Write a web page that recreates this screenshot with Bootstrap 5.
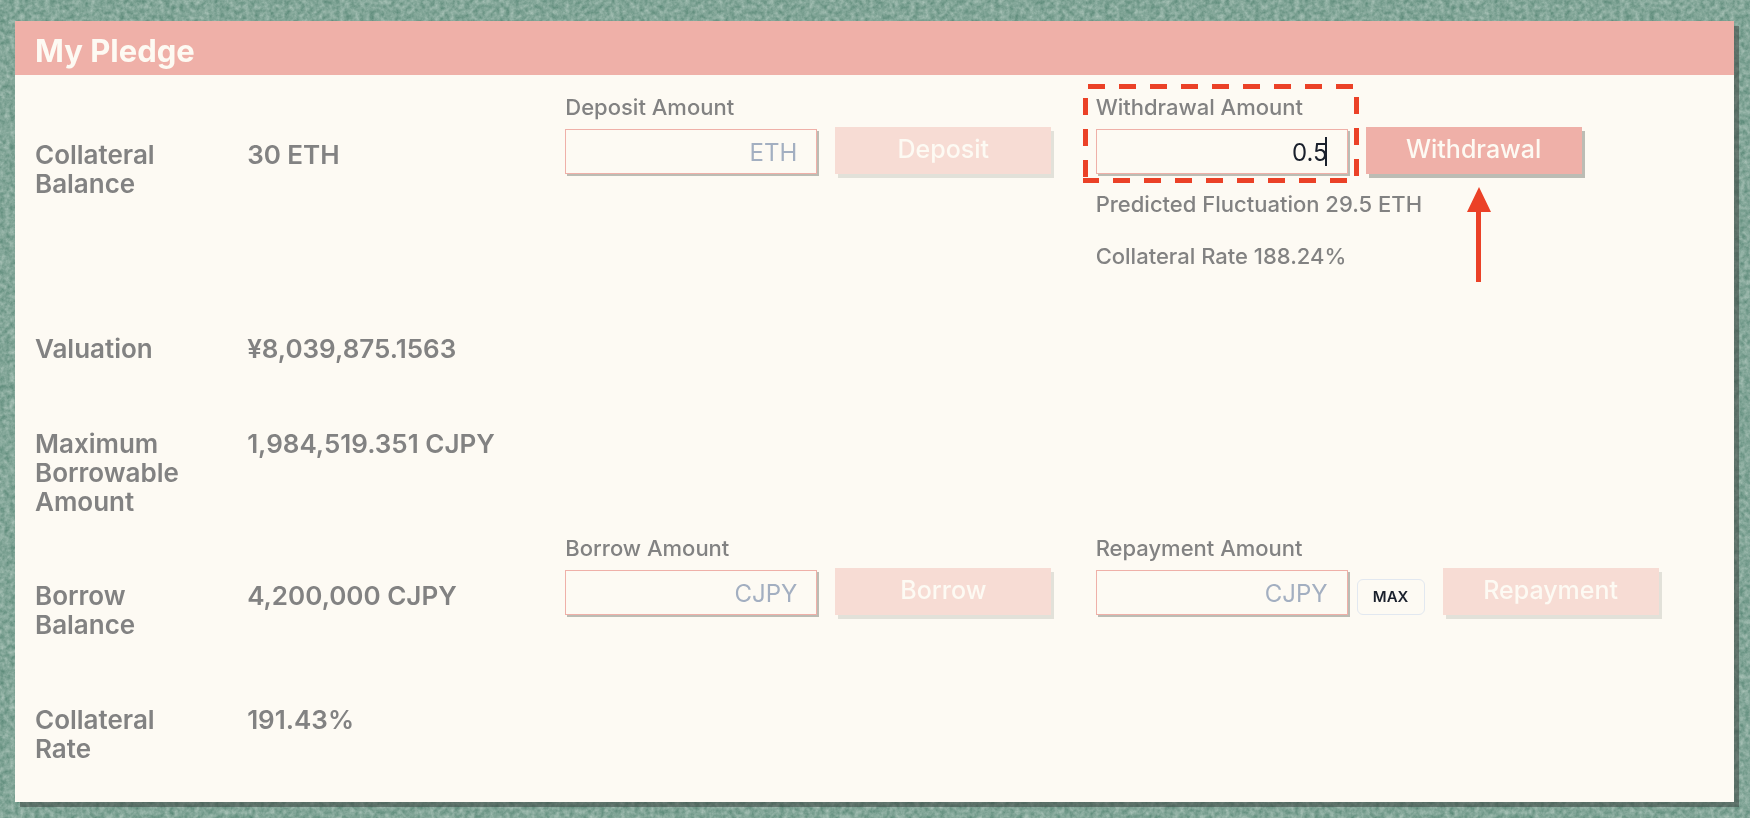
<!DOCTYPE html>
<html lang="en">
<head>
<meta charset="utf-8">
<meta name="viewport" content="width=device-width, initial-scale=1">
<title>My Pledge</title>
<link href="https://cdn.jsdelivr.net/npm/bootstrap@5.3.0/dist/css/bootstrap.min.css" rel="stylesheet">
<style>
  :root { --salmon: #efb0a8; --cream: #fdfaf3; --ink: #828282; }
  body { font-family: Inter, "Liberation Sans", sans-serif; background: #7fa695; color: var(--ink); min-height: 100vh; padding: 21px 16px 17px 15px; }
  .texture { position: fixed; inset: 0; width: 100%; height: 100%; z-index: -1; }
  .pledge { background: var(--cream); box-shadow: 5px 5px 0 rgba(60, 70, 65, .55); }
  .pledge-head { background: var(--salmon); color: var(--cream); height: 54px; padding: 0 20px; }
  .pledge-head h1 { font-size: 31px; font-weight: 700; line-height: 60px; }
  .pledge-body { padding: 20px 2px 39px 20px; }
  .pledge-row { display: grid; grid-template-columns: 2fr 3fr 5fr 6fr; margin-bottom: 66px; }
  .pledge-row:last-child { margin-bottom: 0; }
  .pledge-row.before-fields { margin-bottom: 20px; }
  .term, .figure { font-size: 26px; line-height: 29px; font-weight: 600; }
  .term { max-width: 160px; }
  .has-fields .term, .has-fields .figure { padding-top: 45px; }
  .small-text { font-size: 22px; line-height: 24px; font-weight: 500; }
  .field-label { display: block; margin-bottom: 10px; }
  .note { margin: 18px 0 28px; }
  .amount-wrap { width: 252px; margin-right: 18px; }
  .amount { width: 100%; height: 45px; padding: 2px 19px 0; border: 1px solid var(--salmon); border-radius: 0; background: var(--cream); box-shadow: 2px 2px 0 #bcbcb4; font-size: 24px; text-align: right; color: #1a202c; outline: 0; }
  .amount::placeholder { color: #a3afc1; opacity: 1; }
  .action { width: 216px; height: 47px; margin-top: -2px; padding: 0 0 2px; border: 0; border-radius: 0; background: var(--salmon); color: var(--cream); font-size: 25px; font-weight: 500; line-height: 45px; box-shadow: 3px 4px 0 #bcbcb4; }
  .action:disabled { background: var(--salmon); color: var(--cream); opacity: .4; }
  .max-btn { width: 68px; height: 36px; margin: 9px 18px 0 -9px; padding: 0; border: 1px solid #e2e8f0; border-radius: 6px; background: transparent; color: #1a202c; font-size: 15px; font-weight: 600; }
  .caret { position: absolute; right: 21px; top: 8px; width: 2px; height: 29px; background: #1a202c; }
  .highlight { position: absolute; left: -13px; top: -11px; width: 276px; height: 100px; pointer-events: none; }
  .pointer { position: absolute; left: 371px; top: 92px; width: 24px; height: 95px; pointer-events: none; }
</style>
</head>
<body>
<svg class="texture" aria-hidden="true">
  <filter id="grain" x="0" y="0" width="100%" height="100%" color-interpolation-filters="sRGB">
    <feTurbulence type="fractalNoise" baseFrequency="0.2" numOctaves="3" seed="4"/>
    <feColorMatrix values="0.38 0 0 0 0.32  0.28 0 0 0 0.51  0.31 0 0 0 0.44  0 0 0 0 1"/>
  </filter>
  <rect width="100%" height="100%" filter="url(#grain)"/>
</svg>

<main class="pledge">
  <header class="pledge-head"><h1 class="m-0">My Pledge</h1></header>
  <div class="pledge-body">

    <section class="pledge-row has-fields">
      <div class="term">Collateral Balance</div>
      <div class="figure">30 ETH</div>
      <div>
        <label class="field-label small-text" for="deposit">Deposit Amount</label>
        <div class="d-flex">
          <div class="amount-wrap"><input class="amount" id="deposit" type="text" placeholder="ETH"></div>
          <button class="btn action" type="button" disabled>Deposit</button>
        </div>
      </div>
      <div class="position-relative">
        <label class="field-label small-text" for="withdrawal">Withdrawal Amount</label>
        <div class="d-flex">
          <div class="amount-wrap position-relative">
            <input class="amount" id="withdrawal" type="text" value="0.5">
            <span class="caret"></span>
          </div>
          <button class="btn action" type="button">Withdrawal</button>
        </div>
        <p class="note small-text">Predicted Fluctuation 29.5 ETH</p>
        <p class="small-text mb-0">Collateral Rate 188.24%</p>
        <svg class="highlight" viewBox="0 0 276 100" fill="none" stroke="#eb4127" stroke-width="5" aria-hidden="true">
          <path d="M5 2.5H271" stroke-dasharray="17 14"/>
          <path d="M2.5 14V94M273.5 13V93" stroke-dasharray="17 14"/>
          <path d="M0 96.5H264" stroke-dasharray="17 14" stroke-dashoffset="1"/>
        </svg>
        <svg class="pointer" viewBox="0 0 24 95" fill="#eb4127" aria-hidden="true">
          <path d="M12 0L24 25H14V95H9V25H0Z"/>
        </svg>
      </div>
    </section>

    <section class="pledge-row">
      <div class="term">Valuation</div>
      <div class="figure">¥8,039,875.1563</div>
    </section>

    <section class="pledge-row before-fields">
      <div class="term">Maximum Borrowable Amount</div>
      <div class="figure">1,984,519.351 CJPY</div>
    </section>

    <section class="pledge-row has-fields">
      <div class="term">Borrow Balance</div>
      <div class="figure">4,200,000 CJPY</div>
      <div>
        <label class="field-label small-text" for="borrow">Borrow Amount</label>
        <div class="d-flex">
          <div class="amount-wrap"><input class="amount" id="borrow" type="text" placeholder="CJPY"></div>
          <button class="btn action" type="button" disabled>Borrow</button>
        </div>
      </div>
      <div>
        <label class="field-label small-text" for="repayment">Repayment Amount</label>
        <div class="d-flex">
          <div class="amount-wrap"><input class="amount" id="repayment" type="text" placeholder="CJPY"></div>
          <button class="btn max-btn" type="button">MAX</button>
          <button class="btn action" type="button" disabled>Repayment</button>
        </div>
      </div>
    </section>

    <section class="pledge-row">
      <div class="term">Collateral Rate</div>
      <div class="figure">191.43%</div>
    </section>
  </div>
</main>
<script src="https://cdn.jsdelivr.net/npm/bootstrap@5.3.0/dist/js/bootstrap.bundle.min.js"></script>
</body>
</html>
